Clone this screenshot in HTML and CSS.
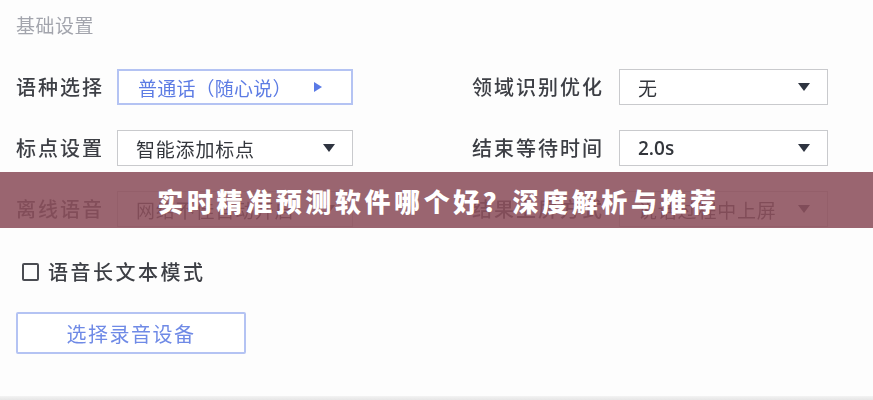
FILE: index.html
```html
<!DOCTYPE html>
<html lang="zh">
<head>
<meta charset="utf-8">
<link rel="stylesheet" href="styles.css">
</head>
<body>
<div class="page">
  <div class="section-title">基础设置</div>
  <div class="form">
    <div class="label">语种选择</div>
    <div class="box box-blue"><span class="val">普通话（随心说）</span><svg class="play" width="10" height="12" viewBox="0 0 10 12"><path d="M1 1 L9 6 L1 11 Z" fill="#5a7ae6"/></svg></div>
    <div class="spacer"></div>
    <div class="label">领域识别优化</div>
    <div class="box"><span class="val">无</span><svg class="caret" width="12" height="8" viewBox="0 0 12 8"><path d="M0 0 L12 0 L6 8 Z" fill="#2e3440"/></svg></div>

    <div class="label">标点设置</div>
    <div class="box"><span class="val">智能添加标点</span><svg class="caret" width="12" height="8" viewBox="0 0 12 8"><path d="M0 0 L12 0 L6 8 Z" fill="#2e3440"/></svg></div>
    <div class="spacer"></div>
    <div class="label">结束等待时间</div>
    <div class="box"><span class="val num">2.0s</span><svg class="caret" width="12" height="8" viewBox="0 0 12 8"><path d="M0 0 L12 0 L6 8 Z" fill="#2e3440"/></svg></div>

    <div class="label">离线语音</div>
    <div class="box"><span class="val">网络不佳自动开启</span><svg class="caret" width="12" height="8" viewBox="0 0 12 8"><path d="M0 0 L12 0 L6 8 Z" fill="#2e3440"/></svg></div>
    <div class="spacer"></div>
    <div class="label">结果上屏方式</div>
    <div class="box"><span class="val">说话过程中上屏</span><svg class="caret" width="12" height="8" viewBox="0 0 12 8"><path d="M0 0 L12 0 L6 8 Z" fill="#2e3440"/></svg></div>
  </div>

  <label class="check"><span class="checkbox"></span><span>语音长文本模式</span></label>

  <div class="btn">选择录音设备</div>
</div>
<div class="banner">实时精准预测软件哪个好？深度解析与推荐</div>
<div class="bottom-line"></div>
</body>
</html>
```

FILE: styles.css
```css
html, body {
  margin: 0;
  padding: 0;
  background: #fdfdfd;
  width: 873px;
  height: 400px;
  overflow: hidden;
  font-family: "Noto Sans CJK SC", "Noto Sans", sans-serif;
}

.page {
  padding: 12px 0 0 16px;
  filter: blur(0.5px);
}

.section-title {
  font-size: 19px;
  line-height: 26px;
  color: #a3a5ad;
  letter-spacing: 0.5px;
}

.form {
  margin-top: 31px;
  display: grid;
  grid-template-columns: 101px 236px 119px 147px 209px;
  grid-auto-rows: 36px;
  row-gap: 25px;
  align-items: center;
}

.label {
  font-size: 20px;
  font-weight: 500;
  letter-spacing: 2px;
  color: #3d3f45;
  line-height: 36px;
}

.box {
  box-sizing: border-box;
  height: 36px;
  border: 1px solid #c9cacd;
  display: flex;
  align-items: center;
  justify-content: space-between;
  padding: 0 17px 0 18px;
  background: #fff;
}

.box-blue {
  border: 2px solid #b4c3f3;
  padding-left: 19px;
  padding-right: 28px;
}

.val {
  font-size: 19px;
  color: #33363c;
  letter-spacing: 0.8px;
}

.box-blue .val {
  color: #5d7ce4;
  letter-spacing: 0.2px;
}

.val.num {
  font-family: "Open Sans", "Noto Sans", sans-serif;
  font-size: 19px;
  font-weight: 600;
  letter-spacing: 0;
}

.check {
  display: flex;
  align-items: center;
  gap: 9px;
  margin-top: 32px;
  margin-left: 6px;
  font-size: 20px;
  font-weight: 500;
  letter-spacing: 2.5px;
  color: #3d3f45;
  line-height: 26px;
}

.checkbox {
  box-sizing: border-box;
  width: 17px;
  height: 18px;
  border: 2px solid #4a4c52;
  border-radius: 2px;
}

.btn {
  box-sizing: border-box;
  width: 230px;
  height: 42px;
  margin-top: 27px;
  border: 2px solid #b4c3f3;
  border-radius: 2px;
  display: flex;
  align-items: center;
  justify-content: center;
  font-size: 20px;
  letter-spacing: 1.5px;
  color: #6f8ae6;
  background: #fff;
}

.banner {
  position: absolute;
  left: 0;
  top: 172px;
  width: 873px;
  height: 56px;
  background: rgba(140, 80, 92, 0.88);
  color: #fff;
  font-size: 26px;
  font-weight: 900;
  letter-spacing: 3.6px;
  display: flex;
  align-items: center;
  justify-content: center;
  padding-left: 4px;
  box-sizing: border-box;
}

.bottom-line {
  position: absolute;
  left: 0;
  top: 396px;
  width: 873px;
  height: 4px;
  background: linear-gradient(#f3f3f3, #e6e6e6);
}
```
